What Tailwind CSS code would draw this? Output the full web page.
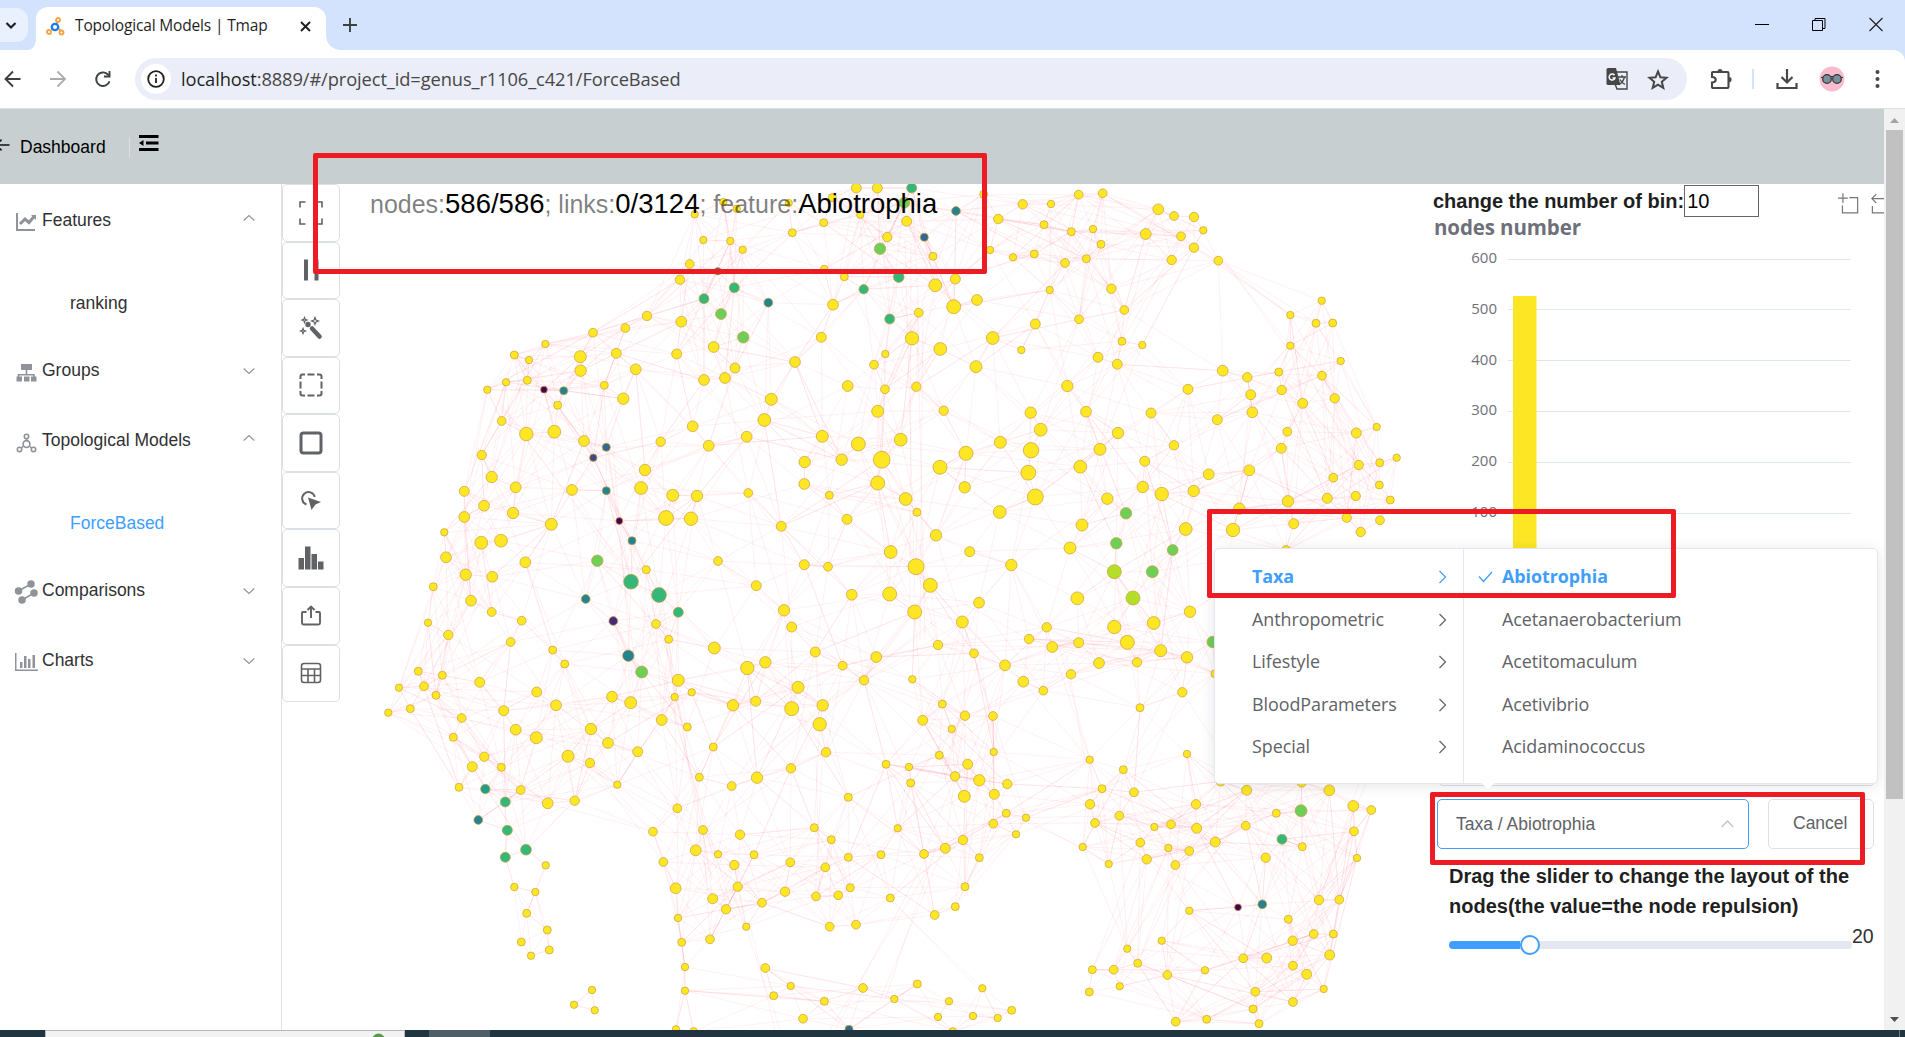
<!DOCTYPE html>
<html lang="en">
<head>
<meta charset="utf-8">
<title>Topological Models | Tmap</title>
<script src="https://cdn.jsdelivr.net/npm/@tailwindcss/browser@4"></script>
</head>
<body class="relative flex h-[1037px] w-[1905px] flex-col overflow-hidden bg-white font-['Liberation_Sans',Arial,sans-serif] text-[17.5px] leading-none whitespace-nowrap text-[#303133]">

<!-- Tab strip -->
<div class="flex h-[50px] shrink-0 items-start bg-[#d3e3fd] font-['Open_Sans','Noto_Sans',sans-serif]">
  <div class="mt-2 flex h-[34px] w-7 items-center justify-center rounded-r-xl bg-[#e9f0fe] pr-[7px]">
    <svg width="12" height="12" viewBox="0 0 12 12" fill="none" stroke="#1f1f1f" stroke-width="2.2"><path d="M1.5 4l4.500 4.500L10.500 4"/></svg>
  </div>
  <div class="flex h-[43px] w-2 items-end self-end"><svg width="8" height="12" viewBox="0 0 8 12"><path d="M8 0v12H0c5 0 8-5 8-12z" fill="#fff"/></svg></div>
  <div class="mt-[7px] flex h-[43px] w-[290px] items-center rounded-t-xl bg-white pb-[17px] pl-[10px]">
    <svg class="mt-3" width="19" height="19" viewBox="0 0 19 19" fill="none" stroke="#f7a33e" stroke-width="1.800"><path d="M11 5v3M5 13l2-1M13 12l2 2" /><circle cx="12" cy="3" r="2"/><circle cx="3" cy="15" r="2"/><circle cx="15.500" cy="15.500" r="2"/><circle cx="9" cy="10" r="3.200" stroke="#1a7cf0" stroke-width="2.300"/></svg>
    <span class="mt-3 ml-[10px] w-[225px] text-[15.5px] tracking-[-0.16px] text-[#1f1f1f]">Topological Models | Tmap</span>
    <svg class="mt-3" width="11" height="11" viewBox="0 0 11 11" stroke="#1f1f1f" stroke-width="1.900"><path d="M1 1l9 9M10 1l-9 9"/></svg>
  </div>
  <div class="flex h-[50px] w-4 items-end"><svg width="16" height="16" viewBox="0 0 16 16"><path d="M0 0v16h16C6 16 0 10 0 0z" fill="#fff"/></svg></div>
  <svg class="mt-[18px] ml-px" width="14" height="14" viewBox="0 0 14 14" stroke="#3c4043" stroke-width="1.900"><path d="M7 0v14M0 7h14"/></svg>
  <div class="ml-auto flex items-center gap-[43px] pt-[17px] pr-[22px]">
    <svg width="14" height="15" viewBox="0 0 14 15" stroke="#000"><path d="M0 7.500h14"/></svg>
    <svg width="14" height="15" viewBox="0 0 14 15" fill="none" stroke="#000"><path d="M.5 3.500h10v10H.5zM3 3V1.500h10v10h-2"/></svg>
    <svg width="14" height="15" viewBox="0 0 14 15" stroke="#222" stroke-width="1.200"><path d="M.5 1l13 13M13.500 1l-13 13"/></svg>
  </div>
</div>

<!-- Address bar -->
<div class="bg-[#d3e3fd]">
<div class="flex h-[59px] shrink-0 items-center rounded-tr-xl border-b border-[#dadfe0] bg-white font-['Open_Sans','Noto_Sans',sans-serif]">
  <svg class="ml-1" width="17" height="18" viewBox="0 0 17 18" fill="none" stroke="#3c4043" stroke-width="1.900"><path d="M16.500 9H2M9 1.500L1.500 9 9 16.500"/></svg>
  <svg class="ml-[29px]" width="16" height="18" viewBox="0 0 16 18" fill="none" stroke="#a9abae" stroke-width="1.800"><path d="M0 9h14M7.500 1.500L15 9l-7.500 7.500"/></svg>
  <svg class="ml-[28px]" width="17" height="18" viewBox="0 0 17 18" fill="none" stroke="#3c4043" stroke-width="1.900"><path d="M15.500 11.200A6.800 6.800 0 1 1 13.600 4.200L15 5.600"/><path d="M15.500 1v5.500H10"/></svg>
  <div class="ml-[24px] flex h-[42px] w-[1552px] items-center rounded-full bg-[#ebeef8] pl-1.5">
    <span class="flex h-[30px] w-[30px] items-center justify-center rounded-full bg-white"><svg width="18" height="18" viewBox="0 0 18 18" fill="none" stroke="#1f1f1f" stroke-width="1.800"><circle cx="9" cy="9" r="7.800"/><path d="M9 8v5M9 4.500v2"/></svg></span>
    <span class="ml-[10px] text-[18.3px] tracking-[-0.1px] text-[#474747]"><span class="text-[#1f1f1f]">localhost</span>:8889/#/project_id=genus_r1106_c421/ForceBased</span>
    <svg class="ml-auto" width="22" height="22" viewBox="0 0 22 22"><path d="M10 4h11v17H11l-2-5" fill="#ebeef8" stroke="#474747" stroke-width="1.400"/><path d="M2 0h8l4.500 17H2q-1.500 0-1.500-1.500v-14Q.5 0 2 0z" fill="#474747"/><path d="M12 9h8M16 7v2M18.500 9c-1 4-2.500 6-5.500 7.500M14 11.500c1 2 2.500 3.500 5 5" stroke="#474747" stroke-width="1.300" fill="none"/><path d="M8.500 7.200A3 3 0 1 0 9 10H6.500" stroke="#fff" stroke-width="1.500" fill="none"/></svg>
    <svg class="mr-[18px] ml-[19px]" width="22" height="21" viewBox="0 0 22 21" fill="none" stroke="#474747" stroke-width="2"><path d="M11 2.500l2.400 5.800 6.100.5-4.700 4 1.500 6.100-5.300-3.300-5.300 3.300 1.500-6.100-4.700-4 6.100-.5z"/></svg>
  </div>
  <svg class="ml-[23px]" width="22" height="22" viewBox="0 0 22 22" fill="none" stroke="#474747" stroke-width="2.100"><path d="M3 4h14.500q1 0 1 1v14q0 1-1 1H3q-1 0-1-1v-4.500c5 0 5-5.500 0-5.500V5q0-1 1-1z"/><path d="M7.500 3.500a2.500 2.500 0 0 1 5 0zM19 9a2.600 2.600 0 0 1 0 5.200z" fill="#474747" stroke="none"/></svg>
  <div class="ml-[20px] h-5 w-0.5 bg-[#d3e3fd]"></div>
  <svg class="ml-[22px]" width="22" height="22" viewBox="0 0 22 22" fill="none" stroke="#474747" stroke-width="2.200"><path d="M11 1v13M5.500 9l5.500 5.500L16.500 9M1.500 15v5h19v-5"/></svg>
  <svg class="ml-[21px]" width="26" height="26" viewBox="0 0 26 26"><circle cx="13" cy="13" r="12.500" fill="#f8bbd0"/><path d="M2 11.500Q13 9.500 24 11.500" stroke="#333" fill="none"/><circle cx="8" cy="13" r="4.300" fill="#78909c" stroke="#333" stroke-width="1.200"/><circle cx="18" cy="13" r="4.300" fill="#78909c" stroke="#333" stroke-width="1.200"/></svg>
  <svg class="ml-[30px]" width="5" height="18" viewBox="0 0 5 18" fill="#474747"><circle cx="2.500" cy="2" r="2"/><circle cx="2.500" cy="9" r="2"/><circle cx="2.500" cy="16" r="2"/></svg>
</div>
</div>

<div class="flex h-[921px] shrink-0">
<div class="flex w-[1884px] flex-col">
  <!-- Page header -->
  <header class="flex h-[75px] shrink-0 items-center bg-[#c7cfd1] text-black">
    <svg class="mt-[-4px]" width="10" height="14" viewBox="0 0 10 14" fill="none" stroke="#111" stroke-width="1.400"><path d="M0 7h9.500M0 3.500L1.500 1.500M0 10.500l1.500 2"/></svg>
    <span class="mt-0.5 ml-[10px] text-[17.500px]">Dashboard</span>
    <span class="ml-[23px] h-5 w-px bg-[#dcdfe6]"></span>
    <svg class="mt-[-7px] ml-[9px]" width="20" height="16" viewBox="0 0 20 16"><path d="M0 0h19.500v3H0zM7 6.500h12.500v3H7zM0 13h19.500v3H0zM0 8l4.500-3v6z"/></svg>
  </header>

  <main class="relative flex min-h-0 flex-1 overflow-hidden">
    <!-- Network graph -->
    <svg id="net" class="absolute top-0 left-[282px]" width="1602" height="846" viewBox="282 184 1602 846"><path id="links" fill="none" stroke="#ff2850" stroke-opacity=".065"/><g id="nodes" stroke="#c8a03c" stroke-opacity=".7" stroke-width="1"></g></svg>

    <!-- Side menu -->
    <nav class="flex w-[282px] shrink-0 flex-col border-r border-[#e0e2e6] bg-white pt-px pr-[26px] pl-[14px]">
      <div class="flex h-[70px] items-center">
        <svg class="mt-1" width="24" height="20" viewBox="0 0 24 20" fill="none" stroke="#909399"><path d="M3 1v17h18" stroke-width="2"/><path d="M6 12l5-5 4 3.500 5-6" stroke-width="3"/><path d="M17 3h5v5z" fill="#909399" stroke="none"/></svg>
        <span class="mt-px ml-1">Features</span><svg class="mt-[-5px] ml-auto" width="12" height="8" viewBox="0 0 12 8" fill="none" stroke="#909399" stroke-width="1.100"><path d="M.7 6.500L6 1.500l5.300 5"/></svg>
      </div>
      <div class="flex h-[81px] items-center pt-[17px] pl-14">ranking</div>
      <div class="flex h-[70px] items-center">
        <svg class="mt-1" width="24" height="20" viewBox="0 0 24 20" fill="#909399"><path d="M7 1h11v6H7zM11.700 7h1.600v4h7.500v3h-1.500v-1.500h-14V14H3.700v-3h8z"/><rect x="2.500" y="13.500" width="5.500" height="5"/><rect x="10" y="13.500" width="5.500" height="5"/><rect x="17" y="13.500" width="5.500" height="5"/></svg>
        <span class="ml-1">Groups</span><svg class="ml-auto" width="12" height="8" viewBox="0 0 12 8" fill="none" stroke="#909399" stroke-width="1.100"><path d="M.7 1.500L6 6.500l5.300-5"/></svg>
      </div>
      <div class="flex h-[70px] items-center">
        <svg class="mt-1" width="24" height="20" viewBox="0 0 24 20" fill="none" stroke="#909399" stroke-width="1.600"><circle cx="12.500" cy="3.500" r="2.200"/><circle cx="12.500" cy="11" r="3.400"/><circle cx="5.500" cy="16.500" r="2.200"/><circle cx="19.500" cy="16.500" r="2.200"/><path d="M12.500 5.700v2M9.700 13l-2.400 2M15.300 13l2.400 2"/></svg>
        <span class="ml-1">Topological Models</span><svg class="mt-[-6px] ml-auto" width="12" height="8" viewBox="0 0 12 8" fill="none" stroke="#909399" stroke-width="1.100"><path d="M.7 6.500L6 1.500l5.300 5"/></svg>
      </div>
      <div class="flex h-[80px] items-center pt-4 pl-14 text-[#409eff]">ForceBased</div>
      <div class="flex h-[70px] items-center">
        <svg class="mt-[2px]" width="24" height="24" viewBox="0 0 24 24" fill="#909399" stroke="#909399" stroke-width="1.500"><circle cx="17" cy="4" r="3"/><circle cx="4.500" cy="11" r="3"/><circle cx="20" cy="13" r="3"/><circle cx="8" cy="20" r="3"/><path d="M4.500 11L17 4M20 13L8 20"/></svg>
        <span class="ml-1">Comparisons</span><svg class="ml-auto" width="12" height="8" viewBox="0 0 12 8" fill="none" stroke="#909399" stroke-width="1.100"><path d="M.7 1.500L6 6.500l5.300-5"/></svg>
      </div>
      <div class="flex h-[70px] items-center">
        <svg class="mt-[2px]" width="24" height="20" viewBox="0 0 24 20" fill="#909399"><path d="M1 1h1.500v16.500H24V19H1zM6 10h2.500v6H6zM10 4h2.500v12H10zM14 7h2.500v9H14zM18.500 3H21v13h-2.500z"/></svg>
        <span class="ml-1">Charts</span><svg class="ml-auto" width="12" height="8" viewBox="0 0 12 8" fill="none" stroke="#909399" stroke-width="1.100"><path d="M.7 1.500L6 6.500l5.300-5"/></svg>
      </div>
    </nav>

    <!-- Graph tools -->
    <div class="relative flex h-[518px] w-[58px] shrink-0 flex-col text-[#606266]">
      <div class="flex flex-1 items-center justify-center rounded-[5px] border border-[#dcdfe6] bg-white"><svg width="24" height="24" viewBox="0 0 24 24" fill="none" stroke="currentColor" stroke-width="1.600"><path d="M1 6.500V1h5.500M17.500 1H23v5.500M23 17.500V23h-5.500M6.500 23H1v-5.500"/></svg></div>
      <div class="flex flex-1 items-center justify-center rounded-[5px] border border-[#dcdfe6] bg-white"><svg width="24" height="24" viewBox="0 0 24 24" fill="currentColor"><path d="M5 1.500h4v21H5zM15.500 1.500h4v21h-4z"/></svg></div>
      <div class="flex flex-1 items-center justify-center rounded-[5px] border border-[#dcdfe6] bg-white"><svg width="24" height="24" viewBox="0 0 24 24" fill="currentColor"><path d="M13 12.500l7.500 8" stroke="currentColor" stroke-width="4.500" stroke-linecap="round"/><circle cx="9" cy="8.500" r="2.700"/><path d="M16 1.500l1 2.500 2.500 1-2.500 1-1 2.500-1-2.500-2.500-1 2.500-1zM5.500 1.500l.7 1.800 1.800.7-1.800.7-.7 1.800-.7-1.800L3 4l1.800-.7zM4 12.500l.7 1.800 1.800.7-1.800.7L4 17.500l-.7-1.800-1.800-.7 1.800-.7z" fill="none" stroke="currentColor" stroke-width="1.200"/></svg></div>
      <div class="flex flex-1 items-center justify-center rounded-[5px] border border-[#dcdfe6] bg-white"><svg width="24" height="24" viewBox="0 0 24 24" fill="none" stroke="currentColor" stroke-width="2"><path d="M1.500 6V3.500q0-2 2-2H6M8.500 1.500h7M18 1.500h2.500q2 0 2 2V6M22.500 8.500v7M22.500 18v2.500q0 2-2 2H18M15.500 22.500h-7M6 22.500H3.500q-2 0-2-2V18M1.500 15.500v-7"/></svg></div>
      <div class="flex flex-1 items-center justify-center rounded-[5px] border border-[#dcdfe6] bg-white"><svg width="24" height="24" viewBox="0 0 24 24" fill="none" stroke="currentColor" stroke-width="3"><rect x="2" y="2" width="20" height="20" rx="2.500"/></svg></div>
      <div class="flex flex-1 items-center justify-center rounded-[5px] border border-[#dcdfe6] bg-white"><svg width="24" height="24" viewBox="0 0 24 24"><path d="M7.500 15.500A6.400 6.400 0 1 1 15.800 8" fill="none" stroke="currentColor" stroke-width="1.900"/><path d="M9 8.500l13 4.500-5.500 2.500L12.500 21z" fill="currentColor"/></svg></div>
      <div class="flex flex-1 items-center justify-center rounded-[5px] border border-[#dcdfe6] bg-white"><svg width="26" height="24" viewBox="0 0 26 24" fill="currentColor"><path d="M.5 12H6v11.500H.5zM7 .5h5.500v23H7zM13.500 8H19v15.500h-5.500zM20 15.500h5.500v8H20z"/></svg></div>
      <div class="flex flex-1 items-center justify-center rounded-[5px] border border-[#dcdfe6] bg-white"><svg width="24" height="24" viewBox="0 0 24 24" fill="none" stroke="currentColor" stroke-width="1.900"><path d="M7.500 8H4q-1 0-1 1v10q0 1.500 1.500 1.500h15q1.500 0 1.500-1.500V9q0-1-1-1h-3.500M12 14V3M8.500 6L12 2.500 15.500 6"/></svg></div>
      <div class="flex flex-1 items-center justify-center rounded-[5px] border border-[#dcdfe6] bg-white"><svg width="24" height="24" viewBox="0 0 24 24" fill="none" stroke="currentColor" stroke-width="1.600"><rect x="2.500" y="2.500" width="19" height="19" rx="2.500"/><path d="M2.500 8h19M2.500 14.500h19M9 8v13M15.500 8v13"/></svg></div>
    </div>

    <p class="relative ml-[30px] h-10 w-[600px] pt-[4px] text-[25px] leading-[32px] text-black/50">nodes:<span class="text-[27.500px] text-black">586/586</span>; links:<span class="text-[27.500px] text-black">0/3124</span>; feature:<span class="text-[27.500px] text-black">Abiotrophia</span></p>

    <!-- Distribution panel -->
    <aside class="relative ml-auto flex w-[451px] shrink-0 flex-col">
      <div class="flex h-[34px] items-center text-xl font-bold text-[#1f1f1f]">
        <span class="-mt-px">change the number of bin:</span>
        <span class="flex h-8 w-[76px] items-center border border-[#6b6464] bg-white pl-0.5 font-normal text-black">10</span>
        <svg class="mt-[5px] ml-[79px]" width="47" height="22" viewBox="0 0 47 22" fill="none" stroke="#777" stroke-width="1.200"><path d="M5 0v10M0 5h10M11.500 4.500H20v15.500H4.500v-7.500M35 5.500h12M39 1l-4.500 4.500L39 10M35 13v7h12"/></svg>
      </div>
      <svg class="shrink-0 overflow-visible" width="451" height="380" viewBox="1433 218 451 380" font-family="Open Sans, Noto Sans, sans-serif" fill="#6e7079">
        <text x="1434" y="235" font-size="20.500" font-weight="700" textLength="147">nodes number</text>
        <path d="M1508 259.500h343M1508 309.500h343M1508 360.500h343M1508 411.500h343M1508 462.500h343M1508 513.500h343" stroke="#e0e6f1"/>
        <path d="M1513 296h23.500v302H1513z" fill="#fde725"/>
        <g font-size="15" text-anchor="end"><text x="1497" y="263">600</text><text x="1497" y="314">500</text><text x="1497" y="365">400</text><text x="1497" y="415">300</text><text x="1497" y="466">200</text><text x="1497" y="517">100</text></g>
      </svg>
      <div class="ml-[5px] h-[188px] w-[437px] shrink-0 rounded-[5px] border border-[#dcdfe6]"></div>
      <div class="mt-[13px] ml-1 flex h-[50px] shrink-0 text-[#606266]">
        <div class="flex w-[312px] items-center justify-between rounded-[5px] border border-[#409eff] bg-white pr-[14px] pl-[18px]"><span class="mt-0.5">Taxa / Abiotrophia</span><svg width="13" height="8" viewBox="0 0 13 8" fill="none" stroke="#c0c4cc" stroke-width="1.400"><path d="M.7 7L6.500 1l5.800 6"/></svg></div>
        <div class="ml-[19px] flex w-[106px] items-center rounded-[5px] border border-[#dcdfe6] bg-white pl-[24px]">Cancel</div>
      </div>
      <p class="mt-[12px] ml-4 text-xl leading-[30px] font-bold text-[#1f1f1f]">Drag the slider to change the layout of the<br>nodes(the value=the node repulsion)</p>
      <div class="mt-[2px] ml-4 flex h-10 items-center">
        <div class="mt-1 flex h-2 w-[403px] items-center rounded bg-[#e4e7ed]"><div class="h-2 w-[71px] rounded-l bg-[#409eff]"></div><div class="h-5 w-5 rounded-full border-2 border-[#409eff] bg-white"></div></div>
        <span class="mb-[12px] text-[19.5px]">20</span>
      </div>
    </aside>

    <!-- Cascader menu -->
    <div class="absolute top-[364px] left-[1214px] flex h-[236px] w-[664px] rounded-[5px] border border-[#e4e7ed] bg-white font-['Open_Sans','Noto_Sans',sans-serif] text-[17.9px] tracking-[-0.05px] text-[#606266] shadow-[0_2px_15px_rgba(0,0,0,0.1)]">
      <ul class="w-[249px] border-r border-[#e4e7ed] pt-[7px] pl-[37px]">
        <li class="flex h-[42.500px] items-center justify-between pr-4 font-bold text-[#409eff]">Taxa<svg width="9" height="14" viewBox="0 0 9 14" fill="none" stroke="currentColor" stroke-width="1.200"><path d="M1.500 1L7.500 7l-6 6"/></svg></li>
        <li class="flex h-[42.500px] items-center justify-between pr-4">Anthropometric<svg width="9" height="14" viewBox="0 0 9 14" fill="none" stroke="currentColor" stroke-width="1.200"><path d="M1.500 1L7.500 7l-6 6"/></svg></li>
        <li class="flex h-[42.500px] items-center justify-between pr-4">Lifestyle<svg width="9" height="14" viewBox="0 0 9 14" fill="none" stroke="currentColor" stroke-width="1.200"><path d="M1.500 1L7.500 7l-6 6"/></svg></li>
        <li class="flex h-[42.500px] items-center justify-between pr-4">BloodParameters<svg width="9" height="14" viewBox="0 0 9 14" fill="none" stroke="currentColor" stroke-width="1.200"><path d="M1.500 1L7.500 7l-6 6"/></svg></li>
        <li class="flex h-[42.500px] items-center justify-between pr-4">Special<svg width="9" height="14" viewBox="0 0 9 14" fill="none" stroke="currentColor" stroke-width="1.200"><path d="M1.500 1L7.500 7l-6 6"/></svg></li>
      </ul>
      <ul class="pt-[7px] pl-[14px]">
        <li class="flex h-[42.500px] items-center font-bold text-[#409eff]"><svg class="mr-[9px]" width="15" height="12" viewBox="0 0 15 12" fill="none" stroke="currentColor" stroke-width="1.200"><path d="M1 5.500L5.500 10.500 14 1"/></svg>Abiotrophia</li>
        <li class="flex h-[42.500px] items-center pl-[24px]">Acetanaerobacterium</li>
        <li class="flex h-[42.500px] items-center pl-[24px]">Acetitomaculum</li>
        <li class="flex h-[42.500px] items-center pl-[24px]">Acetivibrio</li>
        <li class="flex h-[42.500px] items-center pl-[24px]">Acidaminococcus</li>
      </ul>
      <svg class="absolute top-[233px] left-[265px]" width="16" height="8" viewBox="0 0 16 8"><path d="M0 0h16L8 7z" fill="#fff"/></svg>
    </div>
  </main>
</div>

<!-- Scrollbar -->
<div class="flex w-[21px] flex-col items-center bg-[#f1f1f1] pt-[9px] pb-2">
  <svg width="9" height="5" viewBox="0 0 9 5" fill="#a3a3a3"><path d="M0 5h9L4.500 0z"/></svg>
  <div class="mt-[7px] h-[669px] w-[17px] bg-[#c1c1c1]"></div>
  <svg class="mt-auto" width="9" height="5" viewBox="0 0 9 5" fill="#505050"><path d="M0 0h9L4.500 5z"/></svg>
</div>
</div>

<!-- Taskbar -->
<footer class="flex h-[7px] shrink-0 bg-[#20353f]">
  <div class="ml-[45px] flex w-[360px] justify-end border border-b-0 border-[#b8b8b8] bg-[#f2f2f2] pr-[19px]"><svg width="13" height="7" viewBox="0 0 13 7"><circle cx="6.500" cy="9" r="6.500" fill="#5a9c48"/></svg></div>
  <div class="ml-6 w-[61px] bg-[#4f5f68]"></div>
  <div class="mr-[5px] ml-auto w-px bg-[#6c7a81]"></div>
</footer>

<!-- Callout frames -->
<div class="absolute top-[153px] left-[313px] h-[121px] w-[674px] rounded-[2px] border-[5px] border-[#ed1c24]"></div>
<div class="absolute top-[509px] left-[1207px] h-[89px] w-[469px] rounded-[2px] border-[5px] border-[#ed1c24]"></div>
<div class="absolute top-[792px] left-[1430px] h-[73px] w-[435px] rounded-[2px] border-[5px] border-[#ed1c24]"></div>

<script>
// Node lists by tile: origin, then "x y r" triples in thirds of a pixel; a trailing letter selects the colour.
const tiles = [
[345,180,`1135 66 12,1175 86 12,1049 103 12,1075 180 12,1156 183 12,1193 209 12,1034 252 14,1118 274 12 b,1005 299 15,1168 323 16 g,1077 356 16 g,1128 402 17 l,1195 472 18 l,906 408 15,841 444 14,1009 425 17,744 458 14,601 492 12,508 525 13,552 540 12,706 530 19,707 572 18,814 520 16,872 568 17,995 522 16,1106 501 17,1170 564 16,1077 600 17,1140 594 17,483 607 12,547 601 13,427 629 12,597 629 11 p,656 632 13 t,778 616 13,835 656 18,638 676 13,470 723 14,544 762 21,628 755 20,717 783 17,784 802 13 b,745 833 12 i,947 785 15,1043 739 17,1091 797 17,410 825 15,440 891 18,358 934 16,512 922 17,681 930 17,784 932 13 t,900 870 18,888 924 20,983 946 19,1056 948 18,417 977 17,504 999 18,358 1011 17,619 1033 19,823 1023 11 p,963 1014 23,1038 1016 21,298 1057 12,409 1088 20,468 1082 20,861 1082 13 t,303 1132 17,541 1147 17,757 1142 18 l,904 1169 13,1119 1143 14,362 1184 18,442 1190 17,858 1205 23 g,942 1245 23 g,265 1220 13`],
[745,180,`334 24 16,397 24 16,500 24 16 g,262 53 13,131 69 12,478 68 17 l,346 104 12,485 124 16,236 128 13,142 158 13,427 171 15,405 206 18 l,538 172 13 b,633 93 14 t,564 229 13,716 43 13,238 267 12,298 290 13,461 291 17 g,356 328 15 g,571 316 20,631 297 16,626 380 22,696 360 17,521 398 14,434 417 16 g,70 368 14 t,264 374 17,229 472 16,501 475 21,586 507 20,743 474 20,421 522 12,387 554 14,693 560 19,150 546 17,79 658 19,58 720 20,308 618 17,420 628 14,514 620 15,398 694 19,596 692 15,5 770 17,232 769 19,340 792 22,467 779 20,410 839 26,290 839 18,179 846 18,178 912 17,398 909 22,253 946 13,10 939 14,482 957 20,516 997 13,306 1018 16,109 1039 16,573 1066 18,437 1116 20,674 1115 16,513 1160 25,556 1216 22,434 1242 22,320 1244 17,249 1160 14,178 1154 16,34 1217 16,833 73 15,918 72 12,1001 44 14,1073 40 14,760 117 15,897 134 13,979 155 13,1044 147 12,1068 193 13,735 210 12,804 232 12,868 222 13,960 249 14,1024 236 13,914 330 12,1099 326 15,1138 390 14,871 432 16,1002 418 14,1131 484 13,829 510 12,1059 532 16,1117 553 16,967 618 18,857 698 18,1023 695 17,887 749 20,1119 759 18,766 787 19,858 811 24,1065 808 19,663 820 22,585 862 22,1006 860 20,850 878 23,659 922 18,871 951 25,1087 956 18,764 996 20,1143 1000 18 l,1011 1035 19,975 1104 19,1114 1090 18 l,1108 1175 22 y,799 1155 18`],
[1100,180,`175 88 17,222 108 14,282 111 15,137 162 17,243 169 14,310 151 12,282 203 15,215 240 15,355 242 14,665 362 12,571 405 12,648 430 13,698 429 13,571 497 12,722 543 12,127 495 12,368 572 17,442 592 15,536 576 13,666 587 14,264 628 16,545 630 15,452 644 16,608 670 16,704 655 15,457 697 17,352 719 16,153 699 16,562 755 14,544 805 16,769 759 16,830 741 12,222 796 15,134 844 16,776 855 15,839 848 13,890 833 12,448 871 17,326 883 17,700 893 14,838 915 13,128 921 18,185 942 21,281 933 18,564 964 18,682 955 16,767 948 15,871 960 13,418 986 18,399 1050 21,257 1047 20,581 1031 16,740 1013 15,840 1021 14,782 1056 15,218 1110 17 l,157 1175 19 l,99 1254 22 y,558 1110 14`],
[345,590,`378 32 17,440 66 14,530 92 14,249 98 12,310 135 15,722 27 14 t,805 93 14 v,1000 67 16 g,933 102 14,971 148 13,497 156 14,623 180 13,659 222 13,850 197 18 t,890 246 19 l,1108 174 19,220 244 13,292 256 13,162 293 12,237 289 14,273 316 13,130 368 12,196 356 13,404 277 16,350 384 14,325 442 13,476 362 16,575 306 16,633 346 17,512 419 17,574 443 19,801 320 17,857 338 19,1000 271 19,1040 307 12,989 321 12,1164 346 18,950 390 17,1027 411 13,738 417 18,789 459 17,669 499 19,735 519 15,878 485 16,418 500 15,382 530 16,469 532 13,342 592 13,421 597 15 s,527 600 14,481 636 16 g,400 690 14 t,608 640 17,689 632 15,817 584 12,487 721 16 g,543 779 17 g,481 802 16 g,602 826 12,508 891 12,571 906 12,545 970 13,529 1056 13,607 1020 13,613 1080 13,558 1097 12,687 1244 12,741 1200 12,749 1261 12,1105 471 13,1063 562 13,997 655 14,1160 588 14,924 725 14,1074 720 14,1052 781 17,1119 793 12,1185 734 15,955 816 14,1168 825 15,992 895 17,1103 926 16,1178 890 15,1143 958 15,999 984 12,1010 1057 13,1095 1048 14,1020 1131 12,1020 1202 12,993 1318 12,1046 1324 12`],
[745,590,`117 61 18,140 111 16,211 186 16,61 217 18,7 234 21,293 227 14,394 201 17,357 271 15,159 292 19,32 334 16,140 356 22,233 346 18,224 403 21,243 487 15,138 535 15,36 563 18,310 622 13,208 713 13,259 749 13,27 794 13,136 817 14,241 832 14,310 802 13,408 794 13,458 715 12,120 905 15,213 919 14,280 916 14,316 893 13,51 938 14,4 1010 12,254 1010 14,333 1004 14,436 924 13,509 66 22,702 38 17,652 96 19,579 165 15,687 190 14,502 268 12,592 342 13,533 391 16,660 377 15,744 378 14,620 417 12,423 523 13,492 531 12,497 579 13,583 496 13,746 486 12,668 523 16,630 559 15,703 571 18,787 582 15,658 619 19,748 613 16,784 670 13,843 683 12,745 701 14,813 733 12,654 750 15,601 775 16,537 792 14,703 803 13,660 890 13,631 950 13,569 975 14,61 1134 14,137 1188 12,86 1217 13,174 1286 14,238 1234 13,354 1194 14,312 1318 13 b,448 1227 12,517 1182 13,612 1234 12,579 1281 12,623 1324 12,684 1278 12,712 1195 12,758 1284 12,800 1261 13,780 226 17,852 147 15,905 112 15,922 171 17,1001 158 16,835 275 17,895 302 14,978 253 15,1062 219 17`],
[1060,590,`52 25 20,163 111 21,281 99 20,390 65 18,202 157 22,302 182 19,231 217 15,381 202 18,458 156 18 l,465 251 13,367 307 15,240 353 13,381 492 12,89 509 12,190 539 13,126 596 13,222 607 14,90 643 15,178 677 14,105 699 14,283 711 12,333 703 14,408 643 15,410 715 16,241 758 14,325 774 12,388 783 14,260 808 15,346 825 14,466 756 16,68 771 12,146 822 12,482 574 15,560 601 16,725 576 16,808 601 17,880 648 17,934 660 14,649 670 13,723 662 19 l,557 707 14,882 724 14,666 748 16 g,727 770 13,617 803 15,891 804 12,777 930 15,838 929 14,607 943 14 t,534 952 11 p,388 962 12,305 1052 12,202 1076 12,685 988 13,761 1032 14,820 1032 13,698 1052 15,809 1095 16,550 1105 14,620 1104 16,699 1127 14,740 1153 16,791 1197 12,233 1120 13,161 1139 14,97 1139 13,88 1206 13,179 1189 12,322 1155 14,435 1141 12,586 1205 14,699 1236 14,579 1257 13,347 1295 14,440 1288 13,597 1301 13`]];
const colours = {b:'#31688e',g:'#35b779',l:'#6ece58',t:'#26828e',p:'#440154',i:'#3e4989',v:'#482878',s:'#1f9e89',y:'#b5de2b'};
const pts = [];
for (const [ox, oy, list] of tiles) for (const item of list.split(',')) {
  const [x, y, r, c] = item.trim().split(' ');
  const p = {x: ox + x / 3, y: oy + y / 3, r: r / 3, c: colours[c] || '#fde725'};
  if (!pts.some(q => Math.hypot(q.x - p.x, q.y - p.y) < 3)) pts.push(p);
}
let seed = 7;
const rnd = () => (seed = (seed * 16807) % 2147483647) / 2147483647;
// Small detached groups along the lower edge link only within themselves.
const detached = p => p.x < 600 && p.y > 985;
const lowerRow = p => p.y > 960 && p.x > 670 && p.x < 1030;
const leftArm = p => p.x < 560 && p.y > 850;
let d = '';
const line = (a, b) => d += `M${a.x.toFixed(1)} ${a.y.toFixed(1)}L${b.x.toFixed(1)} ${b.y.toFixed(1)}`;
pts.forEach((p, i) => {
  const near = pts.map((q, j) => [Math.hypot(q.x - p.x, q.y - p.y), j]).filter(e => e[1] !== i && detached(p) === detached(pts[e[1]])).sort((a, b) => a[0] - b[0]);
  near.slice(0, 26).forEach(([dist, j], k) => {
    const q = pts[j];
    if (dist > 140 || (k > 1 && rnd() > .23)) return;
    if (dist > 60 && (lowerRow(p) !== lowerRow(q) || leftArm(p) || leftArm(q))) return;
    line(p, q);
  });
});
[[500,407,620,560],[568,399,648,582],[606,430,638,690],[640,600,735,920],[655,590,712,880],[905,240,915,600],[917,300,925,640],[974,654,945,780],[974,654,1000,750],[760,750,940,620],[745,925,780,1030],[816,760,820,900],[925,860,835,1030],[935,850,885,1000],[890,900,982,988],[1218,255,1290,345],[1290,345,1375,490],[1060,650,1090,760],[1300,740,1180,900],[1360,780,1320,900]].forEach(([a,b,c,e]) => { line({x:a,y:b},{x:c,y:e}); line({x:a+6,y:b+4},{x:c-5,y:e}); });
document.getElementById('links').setAttribute('d', d);
document.getElementById('nodes').innerHTML = pts.map(p => `<circle cx="${p.x.toFixed(1)}" cy="${p.y.toFixed(1)}" r="${(p.r - .3).toFixed(1)}" fill="${p.c}"/>`).join('');
</script>
</body>
</html>
